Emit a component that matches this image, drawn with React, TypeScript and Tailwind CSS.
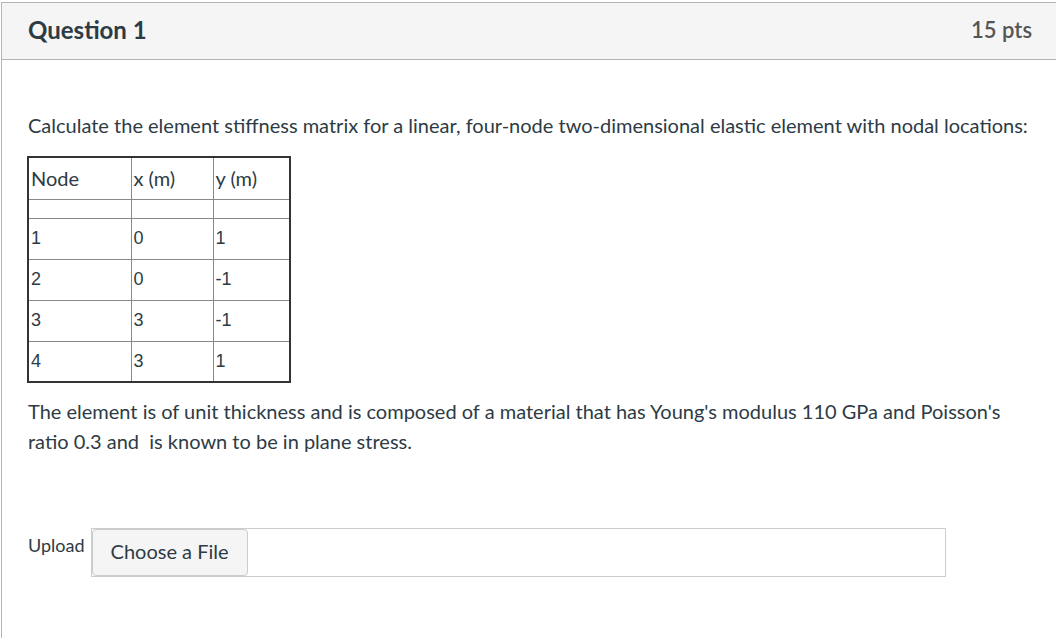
const rows = [
  ["1", "0", "1"],
  ["2", "0", "-1"],
  ["3", "3", "-1"],
  ["4", "3", "1"],
];

const App = () => {
  return (
    <div className="w-[1056px] h-[638px] overflow-hidden bg-white pt-[2px] font-['Lato','Liberation_Sans',sans-serif] text-[#2d3b45]">
      <div className="ml-px w-[1080px] h-[700px] border-l border-t border-[#b4b4b4]">
        <header className="h-[57px] bg-[#f5f5f5] border-b border-[#b4b4b4] flex items-center justify-between pl-[26px] pr-[49px]">
          <h2 className="text-[24px] font-bold leading-[28px] -mt-[3px]">Question 1</h2>
          <span className="text-[22px] font-semibold text-[#555] leading-[28px] -mt-[3px]">15 pts</span>
        </header>

        <div className="pl-[26px] pt-[52px]">
          <p className="text-[20px] leading-[27px] whitespace-nowrap">
            Calculate the element stiffness matrix for a linear, four-node two-dimensional elastic element with nodal locations:
          </p>

          <table className="mt-[17px] -ml-px border-collapse border-2 border-[#333] text-[20px]">
            <colgroup>
              <col className="w-[103px]" />
              <col className="w-[82px]" />
              <col className="w-[77px]" />
            </colgroup>
            <tbody>
              <tr className="h-[42px]">
                <td className="border border-[#888] px-[2px] align-middle">Node</td>
                <td className="border border-[#888] px-[2px] align-middle">x (m)</td>
                <td className="border border-[#888] px-[2px] align-middle">y (m)</td>
              </tr>
              <tr className="h-[19px]">
                <td className="border border-[#888]" />
                <td className="border border-[#888]" />
                <td className="border border-[#888]" />
              </tr>
              {rows.map((r, i) => (
                <tr key={i} className="h-[41px] font-['Liberation_Sans',sans-serif] text-[18px]">
                  {r.map((c, j) => (
                    <td key={j} className="border border-[#888] px-[2px] align-middle">
                      {c}
                    </td>
                  ))}
                </tr>
              ))}
            </tbody>
          </table>

          <p className="mt-[13px] w-[1000px] text-[20px] leading-[30px]">
            The element is of unit thickness and is composed of a material that has Young's modulus 110 GPa and Poisson's ratio 0.3 and&nbsp; is known to be in plane stress.
          </p>

          <div className="mt-[72px] flex items-start gap-[6px]">
            <span className="text-[18px] leading-[34px]">Upload</span>
            <div className="w-[855px] h-[49px] border border-[#ccc] bg-white">
              <button className="h-[47px] w-[156px] rounded-[4px] border border-[#c7cdd1] bg-[#f5f5f5] pb-[4px] text-[20px] text-[#2d3b45]">
                Choose a File
              </button>
            </div>
          </div>
        </div>
      </div>
    </div>
  );
};

export default App;
